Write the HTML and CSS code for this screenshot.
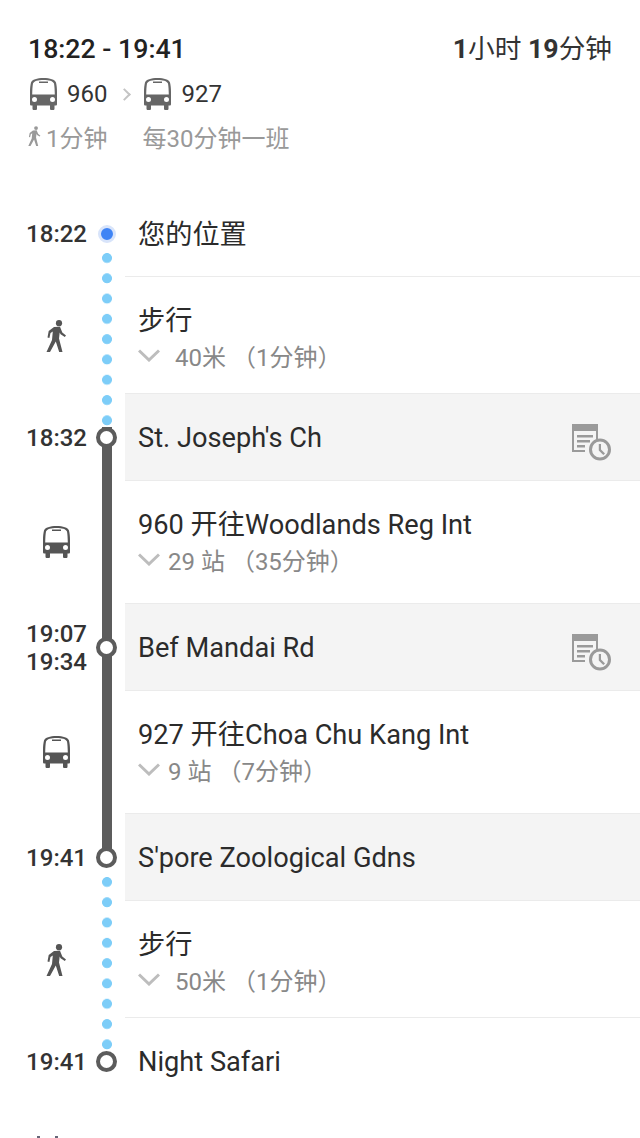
FILE: index.html
```html
<!DOCTYPE html>
<html lang="zh-CN">
<head>
    <meta charset="UTF-8">
    <meta name="viewport" content="width=device-width, initial-scale=1.0">
    <title>公交路线详情</title>
    <link rel="stylesheet" href="styles.css">
</head>
<body>
    <svg class="sprites" width="0" height="0">
        <symbol id="bus" viewBox="0 0 27 32">
            <path fill-rule="evenodd" d="M13.500 0C20 0 25 1.500 26 4.500C26.600 7 27 10 27 14V26C27 27 26.500 27.500 25.500 27.500H24.500V30.500C24.500 31.500 24 32 23 32H21.500C20.500 32 20 31.500 20 30.500V27.500H7V30.500C7 31.500 6.500 32 5.500 32H4C3 32 2.500 31.500 2.500 30.500V27.500H1.500C.5 27.500 0 27 0 26V14C0 10 .4 7 1 4.500C2 1.500 7 0 13.500 0ZM13.500 2C8 2 4 3 3 5.500C2.500 8 2.300 12 2.200 16.500H24.800C24.700 12 24.500 8 24 5.500C23 3 19 2 13.500 2ZM4.500 19A2.500 2.500 0 1 0 4.500 24A2.500 2.500 0 1 0 4.500 19ZM22.500 19A2.500 2.500 0 1 0 22.500 24A2.500 2.500 0 1 0 22.500 19Z"/>
            <path d="M9 3.500H18V5H9Z"/>
        </symbol>
        <symbol id="walk" viewBox="0 0 21 32">
            <circle cx="13" cy="3.200" r="3.100"/>
            <path d="M8 7L14 6.800L16.300 12.500L20 15.500L18.800 17L14.600 14.200L13.700 12.500L13 18.500L16.500 32H13.200L9.800 21.500L4 32H.5L6 20L6.800 11.500L4.500 13L3.400 18L1.500 17.500L2.700 11Z"/>
        </symbol>
        <symbol id="schedule" viewBox="0 0 39 38">
            <path fill-rule="evenodd" d="M0 0H26V16H24V7H2V26H13V28H0Z"/>
            <path d="M5 11H21V13.500H5ZM5 16H18V18.500H5ZM5 21H13V23.500H5Z"/>
            <path fill-rule="evenodd" d="M28 14.500A11 11 0 1 0 28 36.500A11 11 0 1 0 28 14.500ZM28 17.500A8 8 0 1 1 28 33.500A8 8 0 1 1 28 17.500Z"/>
            <path d="M26.800 20H29V25.500L33 29.500L31.300 31L26.800 26.500Z"/>
        </symbol>
        <symbol id="chevron" viewBox="0 0 22 13">
            <path d="M1 1.500L11 11L21 1.500" fill="none" stroke="currentColor" stroke-width="3"/>
        </symbol>
    </svg>

    <header class="summary">
        <div class="summary-top">
            <span class="summary-time">18:22 - 19:41</span>
            <span class="summary-length"><b>1</b>小时 <b>19</b>分钟</span>
        </div>
        <div class="summary-lines">
            <svg class="summary-bus"><use href="#bus"/></svg>
            <span>960</span>
            <span class="summary-arrow"></span>
            <svg class="summary-bus"><use href="#bus"/></svg>
            <span>927</span>
        </div>
        <div class="summary-meta">
            <svg class="summary-walk"><use href="#walk"/></svg>
            <span>1分钟</span>
            <span class="summary-freq">每30分钟一班</span>
        </div>
    </header>

    <main class="timeline">
        <div class="track">
            <div class="track-dots track-dots-a"></div>
            <div class="track-line"></div>
            <div class="track-dots track-dots-b"></div>
        </div>

        <div class="stop stop-start">
            <div class="stop-time">18:22</div>
            <div class="stop-rail"><span class="node node-start"></span></div>
            <div class="stop-name">您的位置</div>
        </div>

        <div class="leg leg-walk">
            <div class="leg-icon"><svg class="icon-walk"><use href="#walk"/></svg></div>
            <div class="leg-body">
                <div class="leg-title">步行</div>
                <div class="leg-sub leg-sub-walk"><svg class="chevron"><use href="#chevron"/></svg>40米 （1分钟）</div>
            </div>
        </div>

        <div class="stop stop-shaded">
            <div class="stop-time">18:32</div>
            <div class="stop-rail"><span class="node"></span></div>
            <div class="stop-name">St. Joseph's Ch <svg class="icon-schedule"><use href="#schedule"/></svg></div>
        </div>

        <div class="leg leg-bus">
            <div class="leg-icon"><svg class="icon-bus"><use href="#bus"/></svg></div>
            <div class="leg-body">
                <div class="leg-title">960 开往Woodlands Reg Int</div>
                <div class="leg-sub"><svg class="chevron"><use href="#chevron"/></svg>29 站 （35分钟）</div>
            </div>
        </div>

        <div class="stop stop-shaded">
            <div class="stop-time stop-time-two">19:07<br>19:34</div>
            <div class="stop-rail"><span class="node"></span></div>
            <div class="stop-name">Bef Mandai Rd <svg class="icon-schedule"><use href="#schedule"/></svg></div>
        </div>

        <div class="leg leg-bus">
            <div class="leg-icon"><svg class="icon-bus"><use href="#bus"/></svg></div>
            <div class="leg-body">
                <div class="leg-title">927 开往Choa Chu Kang Int</div>
                <div class="leg-sub"><svg class="chevron"><use href="#chevron"/></svg>9 站 （7分钟）</div>
            </div>
        </div>

        <div class="stop stop-shaded">
            <div class="stop-time">19:41</div>
            <div class="stop-rail"><span class="node"></span></div>
            <div class="stop-name">S'pore Zoological Gdns</div>
        </div>

        <div class="leg leg-walk">
            <div class="leg-icon"><svg class="icon-walk"><use href="#walk"/></svg></div>
            <div class="leg-body">
                <div class="leg-title">步行</div>
                <div class="leg-sub leg-sub-walk"><svg class="chevron"><use href="#chevron"/></svg>50米 （1分钟）</div>
            </div>
        </div>

        <div class="stop stop-end">
            <div class="stop-time">19:41</div>
            <div class="stop-rail"><span class="node"></span></div>
            <div class="stop-name">Night Safari</div>
        </div>
    </main>

    <!-- next icon, cut off by the bottom of the screen -->
    <div class="cutoff"><span></span><span></span></div>
</body>
</html>
```

FILE: styles.css
```css
html, body {
    height: 100%;
}
body {
    margin: 0;
    overflow: hidden;
    background: #fff;
    color: #2b2b2b;
    font-family: Roboto, "Noto Sans CJK SC", sans-serif;
}
.sprites {
    position: absolute;
}
svg {
    fill: currentColor;
    flex: none;
}

/* top summary */
.summary {
    height: 190px;
    box-sizing: border-box;
    padding: 27px 28px 0;
}
.summary-top {
    display: flex;
    justify-content: space-between;
    align-items: baseline;
    height: 40px;
}
.summary-time {
    font-size: 26.7px;
    font-weight: 500;
    color: #222;
}
.summary-length {
    font-size: 26.7px;
    color: #333;
}
.summary-length b {
    font-weight: 700;
}
.summary-lines {
    display: flex;
    align-items: center;
    height: 36px;
    margin-top: 9px;
    font-size: 24px;
    color: #333;
}
.summary-bus {
    width: 27px;
    height: 32px;
    margin: 0 10px 0 2px;
    color: #666;
}
.summary-arrow {
    width: 7px;
    height: 7px;
    margin: 0 13px;
    border-top: 2px solid #c4c4c4;
    border-right: 2px solid #c4c4c4;
    transform: rotate(45deg);
}
.summary-meta {
    display: flex;
    align-items: center;
    height: 30px;
    margin-top: 9px;
    font-size: 24px;
    color: #999;
}
.summary-walk {
    width: 13px;
    height: 20px;
    margin-right: 5px;
    color: #999;
}
.summary-freq {
    margin-left: 35px;
}

/* route timeline */
.timeline {
    position: relative;
}
.track {
    position: absolute;
    left: 102px;
    top: 63px;
    width: 10px;
    display: flex;
    flex-direction: column;
}
.track-dots {
    background: radial-gradient(circle at 5px 5px, #7dcdf8 4.6px, rgba(125, 205, 248, 0) 5.3px) 0 0 / 10px 20.3px repeat-y;
}
.track-dots-a {
    height: 174px;
}
.track-dots-b {
    height: 177px;
    margin-top: 20px;
}
.track-line {
    height: 430px;
    background: #5c5c5c;
}

.stop {
    display: grid;
    grid-template-columns: 87px 38px 1fr;
    height: 87px;
    box-sizing: border-box;
    position: relative;
}
.stop-time {
    align-self: center;
    text-align: right;
    font-size: 24px;
    font-weight: 500;
    line-height: 28px;
    color: #333;
}
.stop-rail {
    display: flex;
    align-items: center;
    padding-left: 9px;
}
.stop-name {
    display: flex;
    align-items: center;
    justify-content: space-between;
    padding: 1px 29px 0 13px;
    font-size: 27.2px;
    color: #2b2b2b;
}
.stop-shaded .stop-name {
    background: #f4f4f4;
    border-bottom: 1px solid #ebebeb;
}
.stop-start .stop-name {
    padding-top: 0;
    padding-bottom: 3px;
    border-bottom: 1px solid #ebebeb;
}
.node {
    width: 13px;
    height: 13px;
    border: 4px solid #5c5c5c;
    border-radius: 50%;
    background: #fff;
    flex: none;
}
.node-start {
    width: 12px;
    height: 12px;
    margin-left: 2px;
    border: 3px solid #d8e4fa;
    background: #3f84f5;
}

.leg {
    display: grid;
    grid-template-columns: 125px 1fr;
    box-sizing: border-box;
}
.leg-walk {
    height: 117px;
}
.leg-bus {
    height: 123px;
}
.leg-icon {
    display: flex;
    align-items: center;
    padding-left: 43px;
    color: #555;
}
.leg-bus .leg-icon {
    padding-bottom: 2px;
}
.icon-walk {
    width: 21px;
    height: 32px;
    margin-left: 3px;
}
.icon-bus {
    width: 27px;
    height: 32px;
}
.leg-body {
    padding: 25px 13px 0;
    border-bottom: 1px solid #ebebeb;
}
.leg-title {
    font-size: 27.2px;
    line-height: 38px;
}
.leg-sub {
    display: flex;
    align-items: center;
    height: 32px;
    margin-top: -1px;
    font-size: 24px;
    color: #888;
}
.chevron {
    width: 22px;
    height: 13px;
    margin-right: 8px;
    color: #bdbdbd;
}
.leg-sub-walk .chevron {
    margin-right: 15px;
}
.icon-schedule {
    width: 39px;
    height: 38px;
    color: #9a9a9a;
    margin-top: 10px;
}

.cutoff {
    display: flex;
    gap: 15px;
    padding: 31px 0 0 37px;
}
.cutoff span {
    width: 3px;
    height: 2px;
    background: #667;
}
```
